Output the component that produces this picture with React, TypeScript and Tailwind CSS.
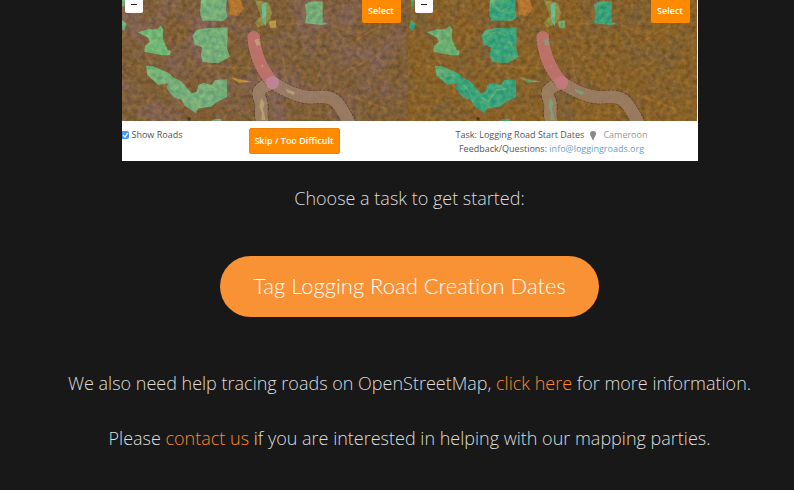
type MapProps = {
  id: string;
  viewBox: string;
  soil: string;
  forest: string;
  fresh: string;
  dust: string;
  className: string;
  sharp?: boolean;
};

function SatelliteMap({ id, viewBox, soil, forest, fresh, dust, className, sharp }: MapProps) {
  const left = Number(viewBox.split(" ")[0]);
  const fern = `url(#${id}-fern)`;
  return (
    <div className={`relative ${className}`}>
      <svg viewBox={viewBox} preserveAspectRatio="xMidYMid slice" className="block h-[121px] w-full" role="img" aria-label="Satellite view of logging roads">
        <defs>
          <filter id={`${id}-grain`} x="0" y="0" width="100%" height="100%" colorInterpolationFilters="sRGB">
            <feTurbulence type="fractalNoise" baseFrequency="0.2" numOctaves="3" seed="7" />
            <feColorMatrix values="1.4 0 0 0 -0.2  1 0.4 0 0 -0.3  0.4 0.3 0.5 0 -0.36  0 0 0 0 0.19" />
          </filter>
          <filter id={`${id}-patches`} x="0" y="0" width="100%" height="100%" colorInterpolationFilters="sRGB">
            <feTurbulence type="fractalNoise" baseFrequency="0.03" numOctaves="5" seed="12" />
            <feColorMatrix values={dust} />
          </filter>
          <filter id={`${id}-rough`} x="-10%" y="-10%" width="120%" height="120%" colorInterpolationFilters="sRGB">
            <feTurbulence type="fractalNoise" baseFrequency="0.2" numOctaves="2" seed="3" result="n" />
            <feDisplacementMap in="SourceGraphic" in2="n" scale="4" xChannelSelector="R" yChannelSelector="G" />
          </filter>
          <linearGradient id={`${id}-fern`} x1="0" y1="0" x2="1" y2="1">
            <stop offset="0" stopColor={fresh} />
            <stop offset="0.3" stopColor={forest} />
            <stop offset="0.75" stopColor={forest} />
            <stop offset="1" stopColor={fresh} />
          </linearGradient>
        </defs>
        <rect x={left} width="300" height="121" fill={soil} />
        <rect x={left} width="300" height="121" filter={`url(#${id}-patches)`} />
        <g transform="translate(-7 0) scale(0.3333)" filter={`url(#${id}-rough)`}>
          <g fill="none" stroke="#b97a32" strokeWidth="6" opacity="0.35">
            <path d="M90 150C100 190 150 260 200 315M340 235L410 245M250 205C300 180 350 220 390 200" />
            <path d="M490 120C520 200 500 220 520 250M585 290C600 240 620 220 618 190M690 140C760 100 790 70 820 80" />
            <path d="M490 75L570 70M650 75L700 95M680 220L790 165M700 285L820 330" />
          </g>
          <path d="M340 0H378L385 25L370 48L345 45Z" fill="#bd782b" />
          <path d="M420 0L460 8L472 40L455 70L430 82L418 68L438 50Z" fill="#929443" />
          <path d="M440 15L455 5L452 80L442 60Z" fill="#69cda3" />
          <path d="M463 65L482 60L484 82L465 84Z" fill={sharp ? "#65b478" : "#c5a343"} />
          <path d="M350 232L370 238L410 245L370 248Z" fill={sharp ? "#64ab6a" : "#cf9b37"} />
          <path d="M21 60L35 72L28 92L15 85Z" fill={fern} />
          <path d="M21 0H30V18L21 20Z" fill={fern} />
          <path d="M68 97L100 88L125 88L138 76L145 90L143 115L158 150L167 152L165 166L140 166L88 155L90 138L105 125L100 113Z" fill={fresh} />
          <path d="M258 0H335L333 35L339 50L325 62L262 62L255 40Z" fill={fern} />
          <path d="M245 90L270 85L338 82V120L336 145L345 170L310 190L262 186L258 160L262 142L240 135L232 108Z" fill={fern} />
          <path d="M93 197L112 198L160 218L175 232L200 245L230 280L245 275L250 255L265 248L290 255L300 240L335 238L337 290L300 310L290 320L250 325L243 340L210 318L200 300L175 290L155 265L158 250L130 255L97 225Z" fill={fern} />
          <path d="M290 363L300 357H318L320 370H290Z" fill={fern} />
          <path d="M570 14L585 5L623 4V67L638 72L620 75L570 70L575 45Z" fill={fern} />
          <g fill="none" stroke="#7dd18c" strokeWidth="4" opacity="0.5">
            <path d="M257 102L280 95L305 106M275 22L293 35L314 20M310 124L325 134" />
            <path d="M230 290L252 304L267 286L278 270L309 266M108 208L127 228L154 227M178 253L200 282" />
          </g>
          <path d="M219 352L228 353L226 361L218 359Z" fill="#49341f" />
        </g>
        <rect x={left} width="300" height="121" filter={`url(#${id}-grain)`} />
        <g transform="translate(-7 0) scale(0.3333)" fill="none">
          <g opacity="0.8" strokeLinejoin="round">
            <path d="M473 248C520 278 560 292 590 292S650 280 675 320S695 350 710 388" stroke="#403329" strokeWidth="42" strokeDasharray="5 5" />
            <path d="M473 248C430 265 425 275 436 300S430 335 445 375" stroke="#403329" strokeWidth="42" strokeDasharray="5 5" />
            <path d="M473 248C520 278 560 292 590 292S650 280 675 320S695 350 710 388" stroke="#9f816c" strokeWidth="38" />
            <path d="M473 248C430 265 425 275 436 300S430 335 445 375" stroke="#a1856c" strokeWidth="38" />
          </g>
          <g opacity="0.9">
            <path d="M416 112C420 165 440 210 473 248" stroke="#603e36" strokeWidth="41" strokeDasharray="5 5" />
            <path d="M416 112C420 165 440 210 473 248" stroke="#c2746e" strokeWidth="38" strokeLinecap="round" />
          </g>
          <g fill={sharp ? "#64b98a" : "#c6b87c"} opacity="0.6">
            <path d="M418 121L430 115L437 135L425 137ZM438 196L445 194L444 204ZM512 266L540 277L536 286L515 275Z" />
            <path d="M439 294L449 310L444 326L452 360H439L441 340L433 319Z" />
          </g>
        </g>
        <circle cx="150.5" cy="82.5" r="6.6" fill={sharp ? "#c37879" : "#bd8594"} />
      </svg>
      <button type="button" aria-label="Zoom out" className={`absolute -top-1 flex h-[17px] w-[18px] items-center justify-center rounded-xs bg-white ${sharp ? "left-[7px]" : "left-[3px]"}`}>
        <span className="h-px w-[6px] bg-[#222]" />
      </button>
      <button type="button" className="absolute -top-1 right-[7px] h-[27px] w-[39px] rounded-xs bg-[#ff8a00] pt-[2px] text-[9px] font-semibold text-white">Select</button>
    </div>
  );
}

export default function App() {
  return (
    <main className="min-h-screen bg-[#181818] pb-9 pl-[25px] text-center font-['Open_Sans',sans-serif] text-[#ddd]">
      <section className="mx-auto max-w-[576px] bg-white text-[9px] text-[#555]">
        <div className="flex pr-px">
          <SatelliteMap id="before" viewBox="0 0 286 121" soil="#7e5c34" forest="#74bd86" fresh="#70c982" dust="0 0 0 0 0.51  0 0 0 0 0.38  0 0 0 0 0.34  3 0 0 0 -1.2" className="min-w-0 flex-[286]" />
          <SatelliteMap id="after" viewBox="-3 0 289 121" soil="#8a6023" forest="#2bb086" fresh="#68bf7e" dust="0 0 0 0 0.49  0 0 0 0 0.37  0 0 0 0 0.20  3 0 0 0 -1.3" className="min-w-0 flex-[289]" sharp />
        </div>
        <div className="grid h-10 grid-cols-[127fr_91px_358fr] items-start">
          <label className="mt-[7px] flex items-center gap-[3px]">
            <span className="relative block h-2 w-[7px]">
              <input type="checkbox" defaultChecked className="block h-2 w-[7px] appearance-none rounded-r-xs bg-[#409bf6]" />
              <svg viewBox="0 0 7 8" className="pointer-events-none absolute inset-0" aria-hidden="true">
                <path d="M1 4L3 6L5.7 2" fill="none" stroke="white" strokeWidth="1.2" />
              </svg>
            </span>
            <span>Show Roads</span>
          </label>
          <button type="button" className="mt-[7px] h-[26px] rounded-xs border border-[#ee8107] bg-[#ff8a00] text-[9px] font-semibold whitespace-nowrap text-white">Skip / Too Difficult</button>
          <div className="mt-[7px] pl-[66px] leading-[14px]">
            <p className="flex items-center justify-center">
              <span>Task: Logging Road Start Dates</span>
              <svg viewBox="0 0 6 9" className="mr-[7px] ml-[6px] h-[9px] w-[6px]" aria-hidden="true">
                <path d="M3 0A3 3 0 0 0 0 3C0 5 2 6 2.5 9H3.5C4 6 6 5 6 3A3 3 0 0 0 3 0Z" fill="#888" />
              </svg>
              <span className="text-[#999]">Cameroon</span>
            </p>
            <p>Feedback/Questions: <a href="mailto:info@loggingroads.org" className="text-[#62a2ce]">info@loggingroads.org</a></p>
          </div>
        </div>
      </section>
      <div className="text-[18px] leading-[30px] font-light">
        <p className="pt-[22px]">Choose a task to get started:</p>
        <button type="button" className="mt-[43px] h-[61px] w-[379px] rounded-[31px] bg-[#f99135] pb-[2px] font-[Lato,sans-serif] text-[22px] font-light text-white [font-variant-ligatures:none]">Tag Logging Road Creation Dates</button>
        <p className="mt-[51px]">We also need help tracing roads on OpenStreetMap, <a href="#tracing" className="text-[#ff892b]">click here</a> for more information.</p>
        <p className="mt-[25px]">Please <a href="#contact" className="text-[#ff892b]">contact us</a> if you are interested in helping with our mapping parties.</p>
      </div>
    </main>
  );
}
